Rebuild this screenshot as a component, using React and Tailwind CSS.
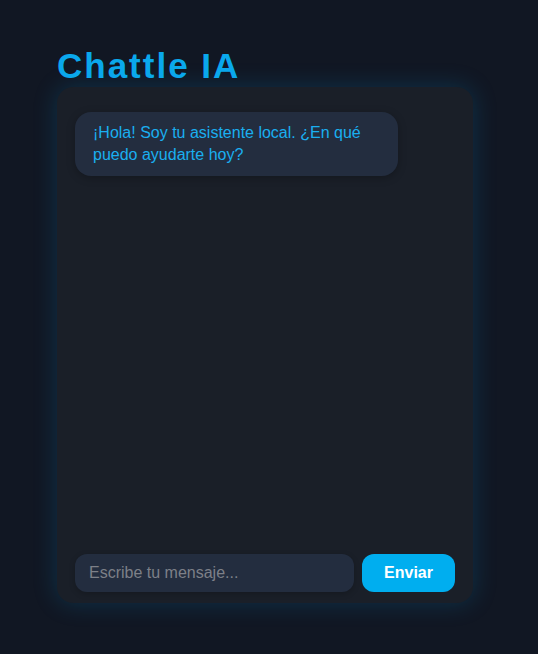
import React, { useState } from 'react';

const font = { fontFamily: '"Liberation Sans", Arial, sans-serif' };

export default function App() {
  const [text, setText] = useState('');
  const messages = [
    { from: 'bot', text: '¡Hola! Soy tu asistente local. ¿En qué puedo ayudarte hoy?' },
  ];

  return (
    <main
      className="min-h-[654px] w-full bg-[#111723] pt-[46px] pl-[57px]"
      style={font}
    >
      <h1 className="text-[35px] leading-[40px] font-bold tracking-[2px] text-[#0aa8ec]">
        Chattle IA
      </h1>
      <section className="mt-[1px] flex h-[516px] w-[416px] flex-col rounded-2xl bg-[#1a1f28] px-[18px] pt-[25px] pb-[11px] shadow-[0_0_24px_rgba(0,150,220,0.22)]">
        <div className="flex flex-1 flex-col gap-3">
          {messages.map((m, i) => (
            <div
              key={i}
              className="max-w-[85%] self-start rounded-2xl bg-[#232d3f] px-[18px] py-[10px] text-base leading-[22px] text-[#1aaff0] shadow-[0_2px_8px_rgba(0,0,0,0.25)]"
            >
              {m.text}
            </div>
          ))}
        </div>
        <div className="flex gap-2">
          <input
            value={text}
            onChange={e => setText(e.target.value)}
            placeholder="Escribe tu mensaje..."
            className="h-[38px] w-[279px] rounded-xl bg-[#232d3f] px-[14px] text-base text-white placeholder:text-[#7d8088] outline-none shadow-[0_2px_6px_rgba(0,0,0,0.2)]"
          />
          <button className="h-[38px] w-[93px] rounded-xl bg-[#00aeef] text-base font-bold text-white">
            Enviar
          </button>
        </div>
      </section>
    </main>
  );
}
